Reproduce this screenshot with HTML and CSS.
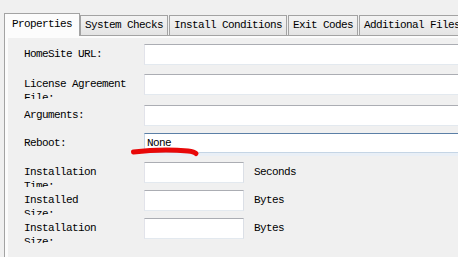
FILE: index.html
```html
<!DOCTYPE html>
<html lang="en">
<head>
    <meta charset="UTF-8">
    <meta name="viewport" content="width=device-width, initial-scale=1.0">
    <title>Package Properties</title>
    <link rel="stylesheet" href="styles.css">
</head>
<body>
    <div class="tabs">
        <div class="tab-bar">
            <div class="tab active">Properties</div>
            <div class="tab">System Checks</div>
            <div class="tab">Install Conditions</div>
            <div class="tab">Exit Codes</div>
            <div class="tab">Additional Files</div>
        </div>
        <div class="tab-panel">
            <div class="panel-body">
                <div class="row">
                    <div class="label">HomeSite URL:</div>
                    <input class="field wide" type="text">
                </div>
                <div class="row push-2">
                    <div class="label">License Agreement File:</div>
                    <input class="field wide" type="text">
                </div>
                <div class="row push-3">
                    <div class="label">Arguments:</div>
                    <input class="field wide" type="text">
                </div>
                <div class="row">
                    <div class="label">Reboot:</div>
                    <input class="field wide combo" type="text" value="None">
                </div>
                <div class="row push-1">
                    <div class="label narrow">Installation Time:</div>
                    <input class="field short" type="text">
                    <div class="unit">Seconds</div>
                </div>
                <div class="row">
                    <div class="label narrow">Installed Size:</div>
                    <input class="field short" type="text">
                    <div class="unit">Bytes</div>
                </div>
                <div class="row">
                    <div class="label narrow">Installation Size:</div>
                    <input class="field short" type="text">
                    <div class="unit">Bytes</div>
                </div>
            </div>
        </div>
    </div>
    <svg class="markup" width="458" height="257" viewBox="0 0 458 257">
        <path d="M133.5 152 C150 150 172 149.5 188 151 C192 151.5 195 152.5 196 153.5" fill="none" stroke="#e80808" stroke-width="5" stroke-linecap="round"/>
    </svg>
</body>
</html>
```

FILE: styles.css
```css
* {
    margin: 0;
    padding: 0;
    box-sizing: border-box;
}
html, body {
    width: 458px;
    height: 257px;
    overflow: hidden;
}
body {
    background-color: #f0f0f0;
    font-family: 'Liberation Mono', monospace;
    font-size: 11px;
    letter-spacing: -0.6px;
    line-height: 14px;
    color: #000;
}
.tab-bar {
    display: flex;
    align-items: flex-end;
    padding: 13px 0 0 4px;
    white-space: nowrap;
}
.tab {
    height: 20px;
    padding: 2px 4px 0 4px;
    margin-left: 1px;
    border: 1px solid #a3a3a3;
    border-bottom: none;
    background: linear-gradient(#f4f4f4, #e4e4e4);
}
.tab.active {
    height: 23px;
    padding: 3px 7px 0 7px;
    margin: 0 0 -1px 0;
    background: #fcfcfc;
    position: relative;
    z-index: 1;
}
.tab.active + .tab {
    margin-left: 0;
}
.tab-panel {
    width: 600px;
    height: 300px;
    margin-left: 4px;
    border: 1px solid #a3a3a3;
    background: #fcfcfc;
    padding: 2px 0 0 3px;
}
.panel-body {
    height: 100%;
    background: #f0f0f0;
    padding: 6px 0 0 16px;
    display: flex;
    flex-direction: column;
    gap: 7px;
}
.row {
    display: flex;
    align-items: flex-start;
    height: 21px;
}
.push-1 { margin-top: 1px; }
.push-2 { margin-top: 2px; }
.push-3 { margin-top: 3px; }
.label {
    width: 120px;
    height: 25px;
    flex-shrink: 0;
    padding: 3px 10px 0 0;
    overflow: hidden;
}
.label.narrow {
    padding-right: 40px;
}
.field {
    height: 21px;
    border: 1px solid;
    border-color: #abadb3 #dbdfe6 #e3e9ef #e2e3ea;
    background: #fff;
    font: inherit;
    letter-spacing: inherit;
    color: #000;
    padding: 0 2px;
    outline: none;
}
.field.wide {
    width: 340px;
    flex-shrink: 0;
}
.field.short {
    width: 100px;
}
.field.combo {
    height: 20px;
    border-color: #5b7fa6 #c5d5e5 #c5d5e5 #c5d5e5;
    box-shadow: 0 3px 0 #e9eff6;
}
.unit {
    padding: 3px 0 0 10px;
}
.markup {
    position: absolute;
    top: 0;
    left: 0;
    pointer-events: none;
}
```
